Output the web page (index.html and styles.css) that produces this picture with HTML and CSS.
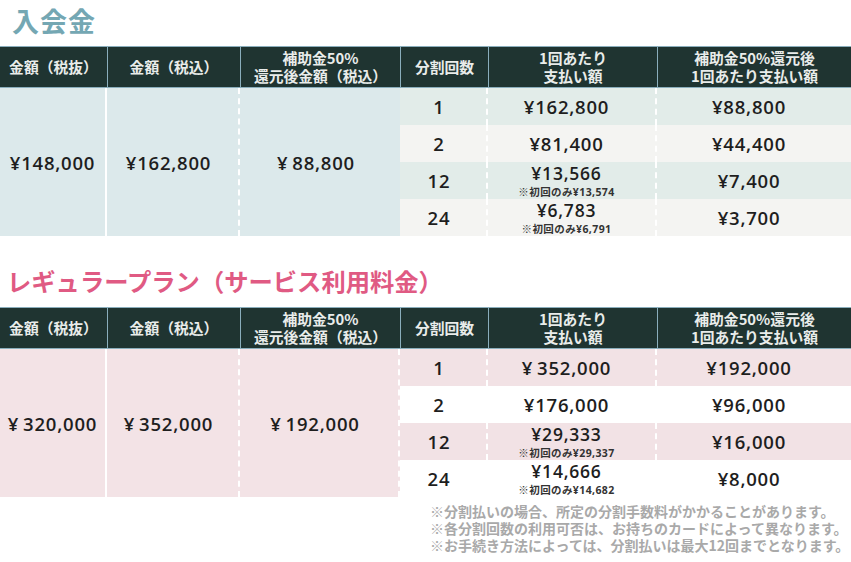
FILE: index.html
```html
<!DOCTYPE html>
<html lang="ja">
<head>
<meta charset="utf-8">
<link rel="stylesheet" href="styles.css">
</head>
<body>
<h2 class="title title-blue">入会金</h2>
<div class="tbl tbl-blue">
  <div class="th">金額（税抜）</div>
  <div class="th">金額（税込）</div>
  <div class="th">補助金50%<br>還元後金額（税込）</div>
  <div class="th">分割回数</div>
  <div class="th">1回あたり<br>支払い額</div>
  <div class="th">補助金50%還元後<br>1回あたり支払い額</div>

  <div class="lc c1">¥148,000</div>
  <div class="lc c2">¥162,800</div>
  <div class="lc c3">¥&thinsp;88,800</div>

  <div class="rc n odd">1</div><div class="rc m odd">¥162,800</div><div class="rc odd">¥88,800</div>
  <div class="rc n even">2</div><div class="rc m even">¥81,400</div><div class="rc even">¥44,400</div>
  <div class="rc n odd">12</div><div class="rc m odd"><div class="stack"><span class="main">¥13,566</span><span class="sub">※初回のみ¥13,574</span></div></div><div class="rc odd">¥7,400</div>
  <div class="rc n even">24</div><div class="rc m even"><div class="stack"><span class="main">¥6,783</span><span class="sub">※初回のみ¥6,791</span></div></div><div class="rc even">¥3,700</div>
</div>

<h2 class="title title-pink">レギュラープラン（サービス利用料金）</h2>
<div class="tbl tbl-pink">
  <div class="th">金額（税抜）</div>
  <div class="th">金額（税込）</div>
  <div class="th">補助金50%<br>還元後金額（税込）</div>
  <div class="th">分割回数</div>
  <div class="th">1回あたり<br>支払い額</div>
  <div class="th">補助金50%還元後<br>1回あたり支払い額</div>

  <div class="lc c1">¥&thinsp;320,000</div>
  <div class="lc c2">¥&thinsp;352,000</div>
  <div class="lc c3">¥&thinsp;192,000</div>

  <div class="rc n odd">1</div><div class="rc m odd">¥&thinsp;352,000</div><div class="rc odd">¥192,000</div>
  <div class="rc n even">2</div><div class="rc m even">¥176,000</div><div class="rc even">¥96,000</div>
  <div class="rc n odd">12</div><div class="rc m odd"><div class="stack"><span class="main">¥29,333</span><span class="sub">※初回のみ¥29,337</span></div></div><div class="rc odd">¥16,000</div>
  <div class="rc n even">24</div><div class="rc m even"><div class="stack"><span class="main">¥14,666</span><span class="sub">※初回のみ¥14,682</span></div></div><div class="rc even">¥8,000</div>
</div>

<div class="notes">
  <p>※分割払いの場合、所定の分割手数料がかかることがあります。</p>
  <p>※各分割回数の利用可否は、お持ちのカードによって異なります。</p>
  <p>※お手続き方法によっては、分割払いは最大12回までとなります。</p>
</div>
</body>
</html>
```
FILE: styles.css
```css
* { box-sizing: border-box; }
html, body { margin: 0; padding: 0; background: #fff; }
body {
  font-family: "Open Sans", "Noto Sans CJK JP", sans-serif;
  color: #1e1e1e;
}
.title {
  margin: 0;
  font-family: "Noto Sans CJK JP", sans-serif;
  font-weight: 700;
}
.title-blue {
  color: #74a7b3;
  font-size: 27px;
  line-height: 41px;
  height: 46px;
  padding-left: 12px;
  letter-spacing: 1px;
}
.title-pink {
  color: #e05a83;
  font-size: 24.3px;
  line-height: 34px;
  padding-top: 28px;
  margin-bottom: 9px;
  padding-left: 7px;
}
.tbl {
  display: grid;
  grid-template-columns: 107px 133px 160px 88px 169px 1fr;
  grid-template-rows: 42px repeat(4, 37px);
}
.th {
  background: #1f3431;
  color: #e9ecea;
  font-family: "Noto Sans CJK JP", sans-serif;
  font-weight: 700;
  font-size: 14.8px;
  line-height: 18px;
  text-align: center;
  display: flex;
  align-items: center;
  justify-content: center;
  border-top: 1px solid #8aaebc;
  border-bottom: 1px solid #8aaebc;
  border-left: 1px solid #8aaebc;
}
.th:first-child { border-left: none; }
.lc, .rc {
  display: flex;
  align-items: center;
  justify-content: center;
  font-weight: 600;
  font-size: 18.5px;
  letter-spacing: 0.8px;
  white-space: nowrap;
}
.lc { grid-row: 2 / span 4; }
.c1 { grid-column: 1; border-right: 2px solid #fff; }
.c2 { grid-column: 2; border-right: 2px dashed #fff; padding-right: 8px; }
.c3 { grid-column: 3; padding-right: 8px; }
.tbl-pink .c3 { border-right: 2px dashed #fff; }
.rc { padding-right: 10px; }
.rc.n, .rc.m { border-right: 2px dashed #fff; }
.rc.n { padding-right: 8px; }

.tbl-blue .lc { background: #dce9eb; }
.tbl-blue .odd { background: #e2ece9; }
.tbl-blue .even { background: #f4f4f2; }
.tbl-pink .lc { background: #f3e3e6; }
.tbl-pink .odd { background: #f2e2e5; }
.tbl-pink .even { background: #ffffff; }

.stack {
  display: flex;
  flex-direction: column;
  align-items: center;
}
.stack .main { font-size: 17.5px; line-height: 23px; }
.stack .sub {
  font-size: 10.5px;
  font-weight: 700;
  line-height: 14px;
  letter-spacing: 0.4px;
  color: #333;
}
.notes {
  padding-left: 430px;
  padding-top: 6px;
  color: #a9a9a9;
  font-family: "Noto Sans CJK JP", sans-serif;
  font-weight: 700;
  font-size: 14px;
  line-height: 17px;
}
.notes p { margin: 0; white-space: nowrap; }
```
